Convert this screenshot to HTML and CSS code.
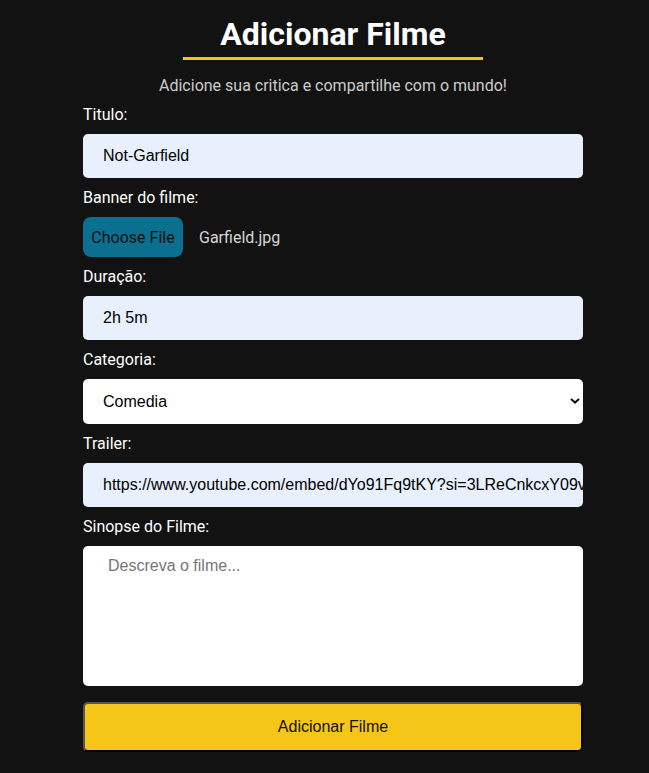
FILE: index.html
```html
<!DOCTYPE html>
<html lang="pt">
<head>
<meta charset="utf-8">
<title>Adicionar Filme</title>
<link rel="stylesheet" href="styles.css">
</head>
<body>
<main class="page">
  <header class="head">
    <h1 class="title">Adicionar Filme</h1>
    <p class="subtitle">Adicione sua critica e compartilhe com o mundo!</p>
  </header>
  <form class="form">
    <label class="label" for="titulo">Titulo:</label>
    <input class="field filled" id="titulo" type="text" value="Not-Garfield">

    <label class="label">Banner do filme:</label>
    <div class="file-row">
      <span class="file-btn">Choose File</span>
      <span class="file-name">Garfield.jpg</span>
    </div>

    <label class="label" for="duracao">Duração:</label>
    <input class="field filled" id="duracao" type="text" value="2h 5m">

    <label class="label" for="categoria">Categoria:</label>
    <div class="select-wrap">
      <select class="field select" id="categoria">
        <option>Comedia</option>
      </select>
      <svg class="chevron" width="10" height="6" viewBox="0 0 10 6"><path d="M1 1 L5 4.6 L9 1" fill="none" stroke="#111" stroke-width="2"/></svg>
    </div>

    <label class="label" for="trailer">Trailer:</label>
    <input class="field filled" id="trailer" type="text" value="https://www.youtube.com/embed/dYo91Fq9tKY?si=3LReCnkcxY09vXyZ">

    <label class="label" for="sinopse">Sinopse do Filme:</label>
    <textarea class="area" id="sinopse" placeholder="Descreva o filme..."></textarea>

    <button class="submit" type="button">Adicionar Filme</button>
  </form>
</main>
</body>
</html>
```

FILE: styles.css
```css
html, body {
  margin: 0;
  padding: 0;
  background: #121212;
}

body {
  font-family: Roboto, "Liberation Sans", sans-serif;
  color: #ffffff;
}

.page {
  width: 500px;
  margin-left: 83px;
}

.head {
  display: flex;
  flex-direction: column;
  align-items: center;
}

.title {
  width: 300px;
  margin: 16px 0 0;
  padding-bottom: 4px;
  border-bottom: 3px solid #f5c518;
  text-align: center;
  font-size: 32px;
  font-weight: 700;
  line-height: 37px;
  color: #ffffff;
}

.subtitle {
  margin: 16px 0 0;
  font-size: 16px;
  line-height: 19px;
  color: #cccccc;
}

.form {
  display: flex;
  flex-direction: column;
  gap: 10px;
  margin-top: 10px;
}

.label {
  display: block;
  font-size: 16px;
  font-weight: 400;
  line-height: 19px;
  color: #ffffff;
}

.field {
  box-sizing: border-box;
  width: 100%;
  height: 44px;
  margin: 0;
  padding: 0 0 0 20px;
  border: none;
  border-radius: 5px;
  font-family: "Liberation Sans", Arial, sans-serif;
  font-size: 16px;
  color: #000000;
  background: #ffffff;
  outline: none;
}

.filled {
  background: #e8f0fe;
}

.file-row {
  display: flex;
  align-items: center;
  gap: 16px;
}

.file-btn {
  box-sizing: border-box;
  width: 100px;
  height: 40px;
  display: flex;
  align-items: center;
  justify-content: center;
  background: #0b6f8f;
  border-radius: 8px;
  color: #111111;
  font-size: 16px;
}

.file-name {
  font-size: 16px;
  color: #d6d6d6;
}

.select-wrap {
  position: relative;
}

.select {
  height: 45px;
  appearance: none;
  -webkit-appearance: none;
  background: #ffffff;
  display: block;
}

.chevron {
  position: absolute;
  right: 3px;
  top: 19px;
  pointer-events: none;
}

.area {
  box-sizing: border-box;
  display: block;
  width: 100%;
  height: 140px;
  margin: 0;
  padding: 11px 25px;
  border: none;
  border-radius: 5px;
  resize: none;
  font-family: "Liberation Sans", Arial, sans-serif;
  font-size: 16px;
  background: #ffffff;
  outline: none;
}

.area::placeholder {
  color: #757575;
}

.submit {
  box-sizing: border-box;
  width: 100%;
  height: 50px;
  margin-top: 6px;
  border: 2px outset #555555;
  border-radius: 5px;
  background: #f5c518;
  color: #111111;
  font-family: "Liberation Sans", Arial, sans-serif;
  font-size: 16px;
  cursor: pointer;
}
```
